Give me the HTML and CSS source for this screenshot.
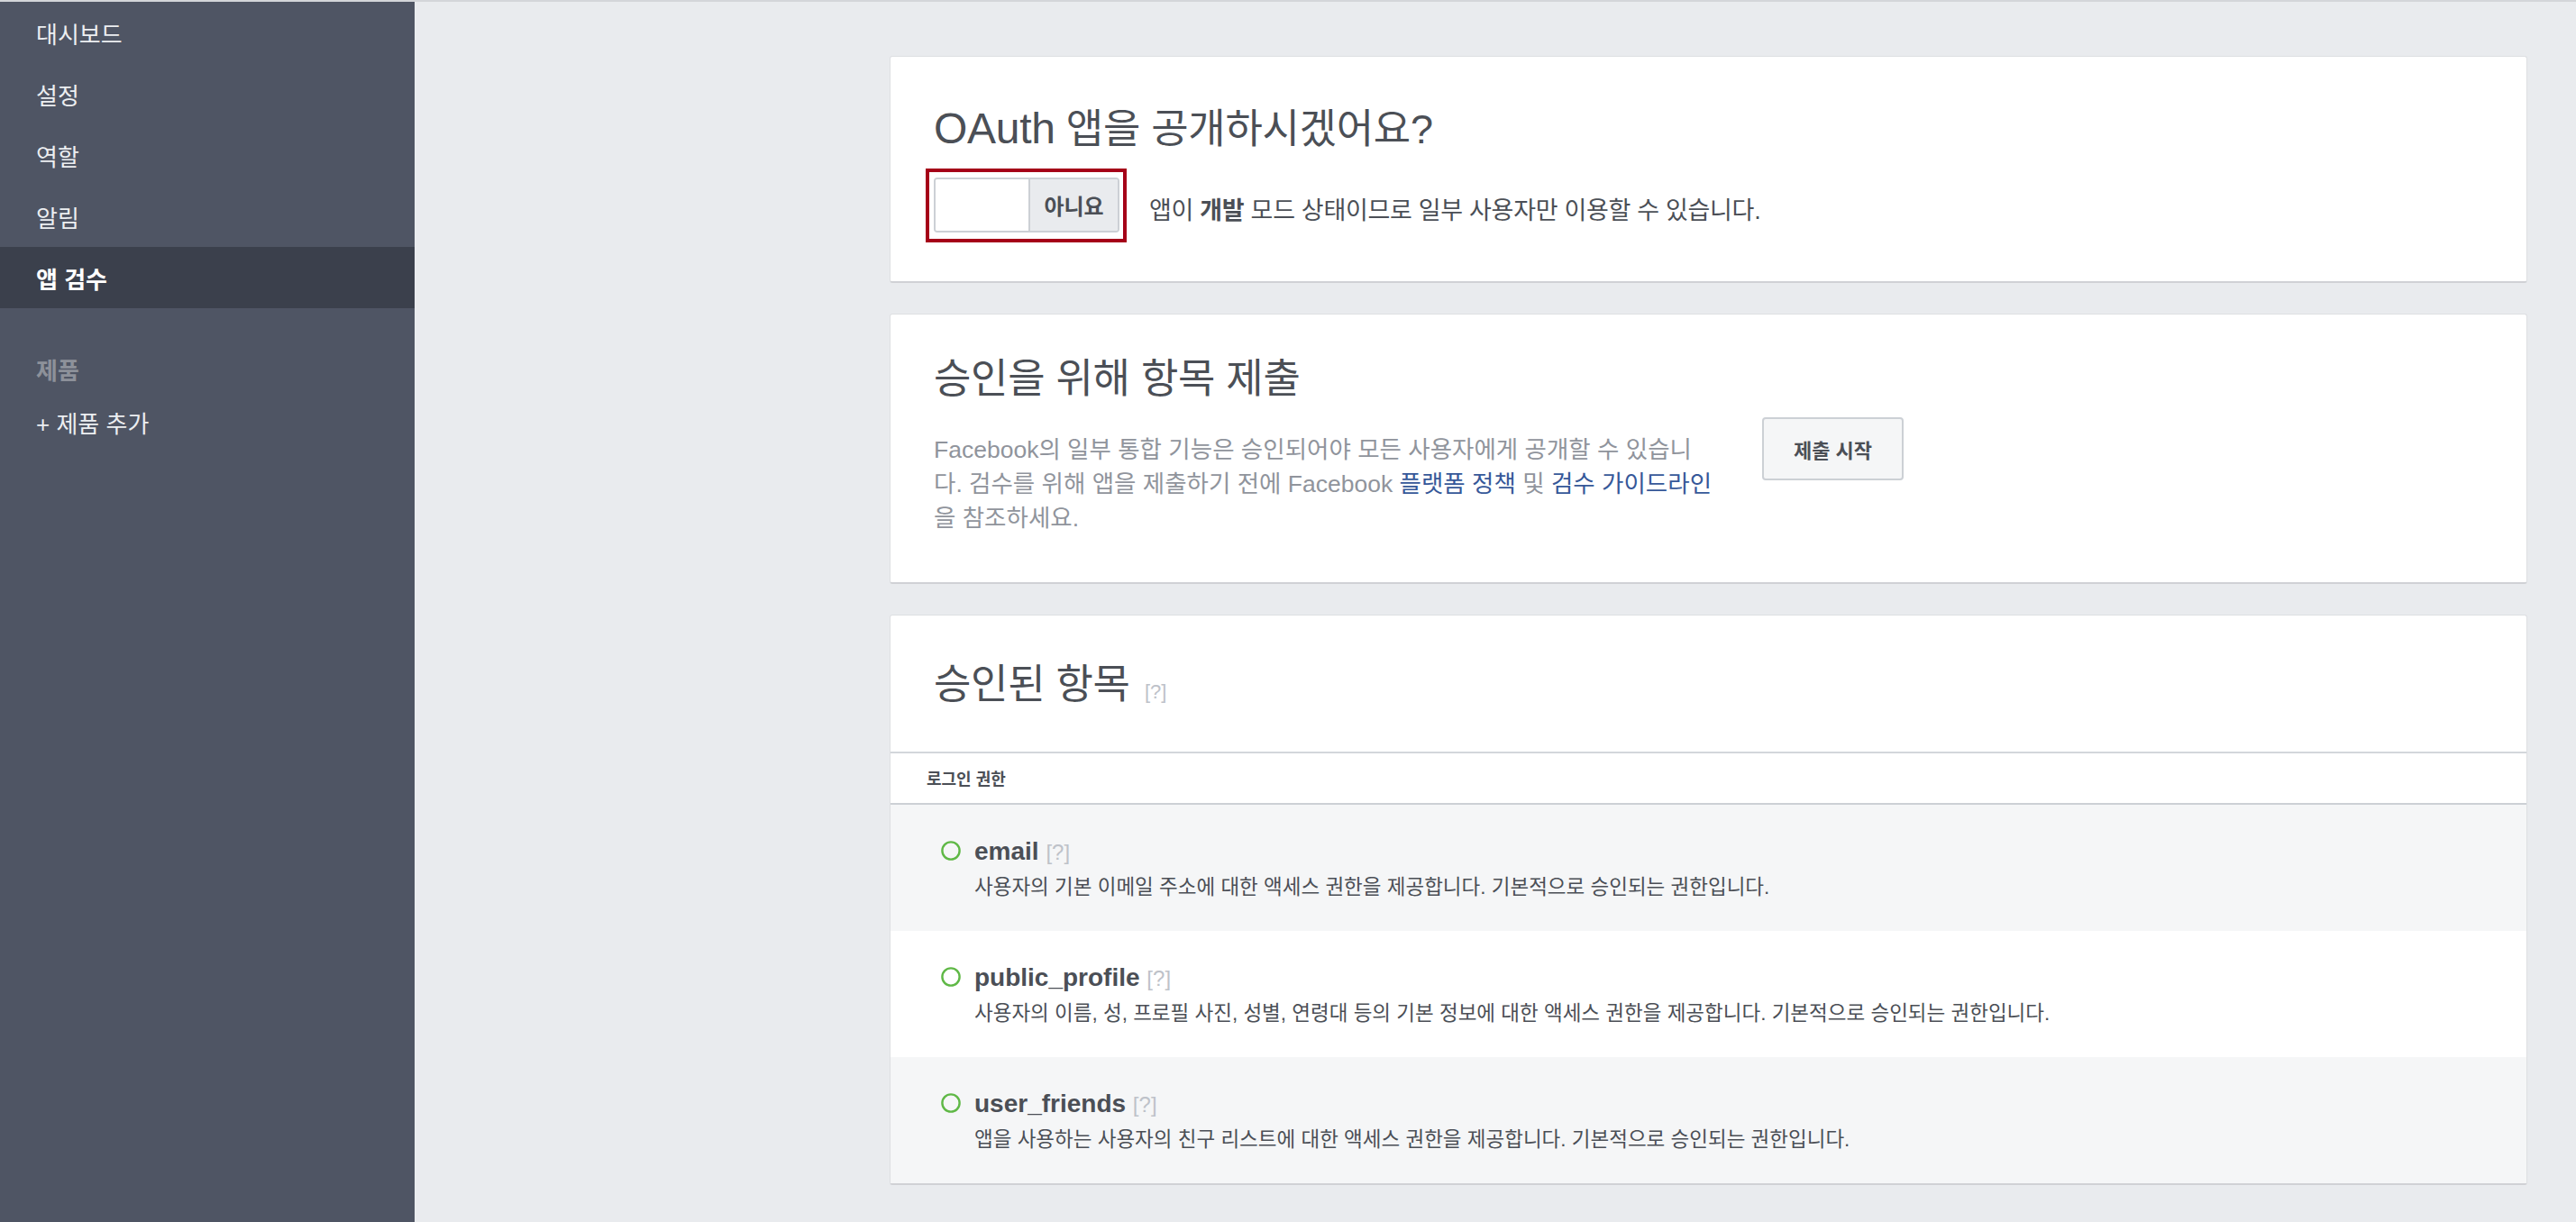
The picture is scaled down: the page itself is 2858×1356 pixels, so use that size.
FILE: index.html
```html
<!DOCTYPE html>
<html lang="ko">
<head>
<meta charset="utf-8">
<title>앱 검수</title>
<link rel="stylesheet" href="styles.css">
</head>
<body>
<div class="topline"></div>
<div class="layout">
  <nav class="sidebar">
    <a class="nav-item">대시보드</a>
    <a class="nav-item">설정</a>
    <a class="nav-item">역할</a>
    <a class="nav-item">알림</a>
    <a class="nav-item active">앱 검수</a>
    <div class="nav-header">제품</div>
    <a class="nav-item">+ 제품 추가</a>
  </nav>
  <main class="main">
    <section class="card card-public">
      <h2 class="card-title"><span class="en">OAuth</span> 앱을 공개하시겠어요?</h2>
      <div class="public-row">
        <div class="highlight">
          <div class="toggle">
            <span class="toggle-on"></span>
            <span class="toggle-off">아니요</span>
          </div>
        </div>
        <p class="public-desc">앱이 <b>개발</b> 모드 상태이므로 일부 사용자만 이용할 수 있습니다.</p>
      </div>
    </section>

    <section class="card card-submit">
      <h2 class="card-title">승인을 위해 항목 제출</h2>
      <div class="submit-row">
        <p class="submit-desc">Facebook의 일부 통합 기능은 승인되어야 모든 사용자에게 공개할 수 있습니다. 검수를 위해 앱을 제출하기 전에 Facebook <a class="link">플랫폼 정책</a> 및 <a class="link">검수 가이드라인</a>을 참조하세요.</p>
        <button class="btn">제출 시작</button>
      </div>
    </section>

    <section class="card card-approved">
      <div class="approved-head">
        <h2 class="card-title">승인된 항목 <span class="help help-lg">[?]</span></h2>
      </div>
      <div class="group-label">로그인 권한</div>
      <ul class="perm-list">
        <li class="perm shaded">
          <svg class="perm-icon" width="22" height="22" viewBox="0 0 22 22"><circle cx="11" cy="11" r="9.6" fill="none" stroke="#5fb846" stroke-width="2.4"/></svg>
          <div class="perm-body">
            <div class="perm-name">email <span class="help">[?]</span></div>
            <div class="perm-desc">사용자의 기본 이메일 주소에 대한 액세스 권한을 제공합니다. 기본적으로 승인되는 권한입니다.</div>
          </div>
        </li>
        <li class="perm">
          <svg class="perm-icon" width="22" height="22" viewBox="0 0 22 22"><circle cx="11" cy="11" r="9.6" fill="none" stroke="#5fb846" stroke-width="2.4"/></svg>
          <div class="perm-body">
            <div class="perm-name">public_profile <span class="help">[?]</span></div>
            <div class="perm-desc">사용자의 이름, 성, 프로필 사진, 성별, 연령대 등의 기본 정보에 대한 액세스 권한을 제공합니다. 기본적으로 승인되는 권한입니다.</div>
          </div>
        </li>
        <li class="perm shaded">
          <svg class="perm-icon" width="22" height="22" viewBox="0 0 22 22"><circle cx="11" cy="11" r="9.6" fill="none" stroke="#5fb846" stroke-width="2.4"/></svg>
          <div class="perm-body">
            <div class="perm-name">user_friends <span class="help">[?]</span></div>
            <div class="perm-desc">앱을 사용하는 사용자의 친구 리스트에 대한 액세스 권한을 제공합니다. 기본적으로 승인되는 권한입니다.</div>
          </div>
        </li>
      </ul>
    </section>
  </main>
</div>
</body>
</html>
```

FILE: styles.css
```css
* { box-sizing: border-box; }
html, body { margin: 0; padding: 0; }
body {
  background: #e9ebee;
  font-family: "Liberation Sans", "Noto Sans CJK KR", sans-serif;
  color: #4b4f56;
  width: 2858px;
  height: 1356px;
  overflow: hidden;
}
.topline {
  height: 2px;
  background: #d3d5d9;
}
.layout {
  display: flex;
  height: 1354px;
}
.sidebar {
  width: 460px;
  flex: none;
  background: #4f5564;
  display: flex;
  flex-direction: column;
}
.nav-item {
  display: flex;
  align-items: center;
  height: 68px;
  padding-left: 40px;
  font-size: 26px;
  color: #eceef1;
}
.nav-item.active {
  background: #3b404c;
  color: #fff;
  font-weight: bold;
}
.nav-header {
  margin-top: 42px;
  height: 50px;
  display: flex;
  align-items: center;
  padding-left: 40px;
  font-size: 26px;
  font-weight: bold;
  color: #8d919a;
}
.main {
  flex: 1;
  padding: 60px 54px 0 527px;
}
.card {
  background: #fff;
  border: 1px solid #dddfe2;
  border-bottom: 2px solid #d0d1d5;
  border-radius: 3px;
  margin-bottom: 34px;
}
.card-title {
  margin: 0;
  font-size: 45px;
  font-weight: normal;
  line-height: 56px;
  color: #4b4f56;
  letter-spacing: -0.3px;
}
.card-title .en { font-size: 48px; }

/* card 1 */
.card-public {
  padding: 52px 48px 43px;
}
.public-row {
  display: flex;
  align-items: center;
  margin-top: 15px;
}
.highlight {
  margin-left: -9px;
  border: 4px solid #a50018;
  padding: 6px 4px 7px 5px;
}
.toggle {
  display: flex;
  width: 206px;
  height: 61px;
  border: 2px solid #ccd0d5;
  border-radius: 4px;
  overflow: hidden;
}
.toggle-on {
  width: 105px;
  background: #fff;
  border-right: 2px solid #ccd0d5;
}
.toggle-off {
  flex: 1;
  background: #e9ebee;
  display: flex;
  align-items: center;
  justify-content: center;
  font-size: 24px;
  font-weight: bold;
  color: #4b4f56;
}
.public-desc {
  margin: 6px 0 0 25px;
  font-size: 27px;
  color: #4b4f56;
  letter-spacing: -0.3px;
}
.public-desc b { font-weight: bold; }

/* card 2 */
.card-submit {
  padding: 44px 48px 52px;
  margin-bottom: 34px;
}
.submit-row {
  display: flex;
  align-items: flex-start;
  margin-top: 14px;
}
.submit-desc {
  width: 868px;
  margin: 17px 0 0;
  font-size: 26.5px;
  line-height: 38px;
  color: #90949c;
}
.link {
  display: inline-block;
  color: #365899;
}
.btn {
  margin-left: 51px;
  width: 157px;
  height: 70px;
  background: #f5f6f7;
  border: 2px solid #ccd0d5;
  border-radius: 4px;
  font-family: inherit;
  font-size: 22px;
  font-weight: bold;
  color: #4b4f56;
  padding: 0;
}

/* card 3 */
.card-approved {
  margin-bottom: 0;
  overflow: hidden;
}
.approved-head {
  height: 153px;
  padding: 49px 48px 0;
  border-bottom: 2px solid #d3d6db;
}
.help {
  color: #bec2c9;
  font-size: 24px;
  letter-spacing: 0;
}
.help-lg { font-size: 22px; margin-left: 4px; }
.group-label {
  height: 57px;
  display: flex;
  align-items: center;
  padding-left: 40px;
  padding-bottom: 2px;
  font-size: 18px;
  font-weight: bold;
  color: #4b4f56;
  border-bottom: 2px solid #ccd0d5;
}
.perm-list {
  list-style: none;
  margin: 0;
  padding: 0;
}
.perm {
  display: flex;
  align-items: flex-start;
  height: 140px;
  padding: 40px 0 0 56px;
  background: #fff;
}
.perm.shaded { background: #f5f6f7; }
.perm-icon {
  flex: none;
}
.perm-body {
  margin-left: 15px;
}
.perm-name {
  font-size: 28px;
  font-weight: bold;
  line-height: 24px;
  color: #4b4f56;
}
.perm-name .help { font-weight: normal; }
.perm-desc {
  margin-top: 12px;
  font-size: 22.5px;
  line-height: 30px;
  color: #4b4f56;
}
```
